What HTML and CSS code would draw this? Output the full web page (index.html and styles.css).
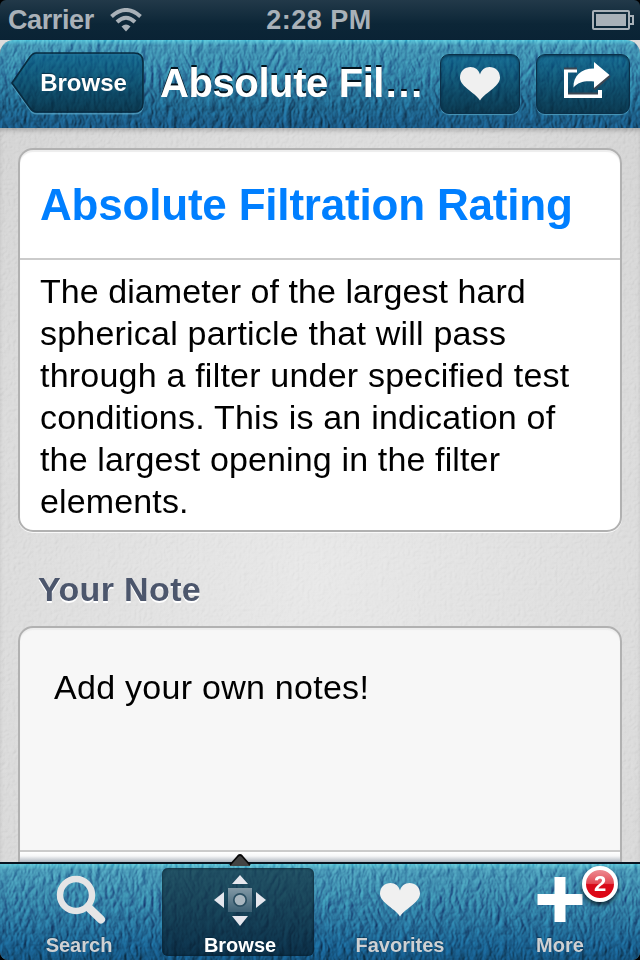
FILE: index.html
```html
<!DOCTYPE html>
<html lang="en">
<head>
<meta charset="utf-8">
<title>Absolute Filtration Rating</title>
<link rel="stylesheet" href="styles.css">
</head>
<body>
<svg class="defs" width="0" height="0" aria-hidden="true">
  <filter id="leather" x="0" y="0" width="100%" height="100%" color-interpolation-filters="sRGB">
    <feTurbulence type="turbulence" baseFrequency="0.13 0.07" numOctaves="4" seed="8" result="n"/>
    <feDiffuseLighting in="n" surfaceScale="1.3" diffuseConstant="0.74" lighting-color="#fff">
      <feDistantLight azimuth="205" elevation="44"/>
    </feDiffuseLighting>
  </filter>
  <filter id="paper" x="0" y="0" width="100%" height="100%" color-interpolation-filters="sRGB">
    <feTurbulence type="turbulence" baseFrequency="0.19" numOctaves="3" seed="3" result="n"/>
    <feDiffuseLighting in="n" surfaceScale=".8" diffuseConstant="0.74" lighting-color="#fff">
      <feDistantLight azimuth="215" elevation="44"/>
    </feDiffuseLighting>
  </filter>
</svg>
<div class="screen">
  <header class="status">
    <div class="carrier"><span>Carrier</span>
      <svg width="32" height="24" viewBox="0 0 32 24"><g fill="none" stroke="#a9b1b8" stroke-width="4"><path d="M1.500 8.500Q16-4.500 30.500 8.500"/><path d="M7 14Q16 5.500 25 14"/></g><path d="M11.500 18.500Q16 14.500 20.500 18.500L16 23.500Z" fill="#a9b1b8"/></svg>
    </div>
    <div class="clock">2:28 PM</div>
    <svg class="battery" width="42" height="20" viewBox="0 0 42 20"><rect x="1" y="1" width="36" height="18" rx="1" fill="none" stroke="#a9b1b8" stroke-width="2"/><path d="M4 4H34V16H4Z" fill="#a9b1b8"/><path d="M38 6H41V14H38" fill="none" stroke="#a9b1b8" stroke-width="2"/></svg>
  </header>
  <nav class="navbar">
    <svg class="grain" width="640" height="88"><rect width="640" height="88" filter="url(#leather)"/></svg>
    <button class="back"><svg width="136" height="64" viewBox="0 0 136 64"><defs><linearGradient id="bg" x1="0" y1="0" x2="0" y2="1"><stop offset="0" stop-color="#005680" stop-opacity=".64"/><stop offset="1" stop-color="#052a3b" stop-opacity=".74"/></linearGradient></defs><path d="M26 1H124Q133 1 133 10V51Q133 60 124 60H26Q23 60 20 56L2 31" transform="translate(0 1.700)" fill="none" stroke="#5ba8c9" stroke-width="1.500" opacity=".7"/><path d="M26 1H124Q133 1 133 10V51Q133 60 124 60H26Q23 60 20 56L2 31L20 5Q23 1 26 1Z" fill="url(#bg)" stroke="#082b40" stroke-width="1.700"/></svg><span>Browse</span></button>
    <h1>Absolute Fil…</h1>
    <button class="tool heart"><svg width="40" height="34" viewBox="0 0 40 34"><path d="M20 33.500C17 28.500 12 26 7 21.500C2.500 17.500 0 14.500 0 10.500C0 4 5 0 10.500 0C15 0 19 3 20 7.500C21 3 25 0 29.500 0C35 0 40 4 40 10.500C40 14.500 37.500 17.500 33 21.500C28 26 23 28.500 20 33.500Z" fill="#f0f0f0"/></svg></button>
    <button class="tool share"><svg width="48" height="38" viewBox="0 0 48 38"><path d="M14 8.500H3V34H37V28" fill="none" stroke="#fff" stroke-width="4"/><path d="M1 6.500H14M5 31.500H35" fill="none" stroke="#3b4652" stroke-width="2"/><path d="M31 27L46.500 13.500" stroke="#3b4652" stroke-width="3"/><path d="M31 0L46.500 13L31 26V19.500C22 18.500 15 20 10.500 25.500C10 14 18 6.500 31 6.500Z" fill="#fff"/></svg></button>
  </nav>
  <main class="content">
    <svg class="grain" width="640" height="734"><rect width="640" height="734" filter="url(#paper)"/></svg>
    <section class="card term">
      <h2>Absolute Filtration Rating</h2>
      <p><span class="first">The diameter of the largest hard</span><br>spherical particle that will pass<br>through a filter under specified test<br>conditions. This is an indication of<br><span class="last">the largest opening in the filter<br>elements.</span></p>
    </section>
    <h3>Your Note</h3>
    <section class="card note"><p>Add your own notes!</p><div class="next"></div></section>
  </main>
  <footer class="tabs">
    <svg class="grain" width="640" height="96"><rect width="640" height="96" filter="url(#leather)"/></svg>
    <div class="tab search"><svg width="50" height="50" viewBox="0 0 50 50"><circle cx="20" cy="20" r="16" fill="none" stroke="#e5e5e6" stroke-width="6.500"/><path d="M32 32L45 44.500" stroke="#e5e5e6" stroke-width="8" stroke-linecap="round"/></svg><span>Search</span></div>
    <div class="tab active"><svg width="52" height="52" viewBox="0 0 52 52"><defs><linearGradient id="pad" x1="0" y1="0" x2="0" y2="1"><stop offset="0" stop-color="#8198a5"/><stop offset="1" stop-color="#3c6074"/></linearGradient></defs><path d="M14 14H38V38H14Z" fill="url(#pad)"/><circle cx="26" cy="26" r="6.200" fill="#a9b7c0" stroke="#2b4f62" stroke-width="1.700"/><path d="M26 1L34 10H18ZM26 52L34 42H18ZM0 26L10 18V34ZM52 26L42 18V34Z" fill="#e5e7ee"/></svg><span>Browse</span></div>
    <div class="tab fav"><svg width="40" height="34" viewBox="0 0 40 34"><path d="M20 33.500C17 28.500 12 26 7 21.500C2.500 17.500 0 14.500 0 10.500C0 4 5 0 10.500 0C15 0 19 3 20 7.500C21 3 25 0 29.500 0C35 0 40 4 40 10.500C40 14.500 37.500 17.500 33 21.500C28 26 23 28.500 20 33.500Z" fill="#f0f0f0"/></svg><span>Favorites</span></div>
    <div class="tab more"><svg width="46" height="46" viewBox="0 0 46 46"><path d="M17.500 0H28.500V17H45.500V28H28.500V45H17.500V28H.5V17H17.500Z" fill="#fff"/></svg><span>More</span><b class="badge">2</b></div>
    <svg class="pointer" width="22" height="12" viewBox="0 0 22 12"><path d="M1 11L9 2Q11 0 13 2L21 11V12H1Z" fill="#434343"/><path d="M1 11L9 2Q11 0 13 2L21 11" fill="none" stroke="#080808" stroke-width="1.800"/></svg>
  </footer>
</div>
</body>
</html>
```
FILE: styles.css
```css
* { box-sizing: border-box; }
body { margin: 0; background: #000; font-family: "Liberation Sans", Arial, sans-serif; }
h1, h2, h3, p { margin: 0; }
svg { display: block; flex: none; }
.defs { position: absolute; }
.screen { width: 640px; height: 960px; display: flex; flex-direction: column; overflow: hidden; background: linear-gradient(#000 0, #000 20px, #dcdcdc 20px, #dcdcdc 900px, #000 900px); }
.status { height: 40px; flex: none; display: grid; grid-template-columns: 1fr auto 1fr; align-items: center; padding: 0 6px 0 8px; background: linear-gradient(#223949, #0c2637 60%, #0a2335); color: #a9b1b8; font-weight: bold; font-size: 27px; border-radius: 6px 6px 0 0; }
.carrier { display: flex; align-items: center; gap: 16px; letter-spacing: -.4px; }
.clock { letter-spacing: .5px; padding-right: 4px; }
.battery { justify-self: end; }
.grain { position: absolute; left: 0; top: 0; pointer-events: none; }
.navbar, .tabs { position: relative; isolation: isolate; overflow: hidden; }
.navbar { height: 88px; flex: none; display: flex; align-items: flex-start; background: linear-gradient(#54c3d9 0, #4394b4 5px, #3483a8 35%, #1f648b 75%, #185580); border-radius: 14px 14px 0 0; }
.navbar .grain, .tabs .grain { z-index: -1; mix-blend-mode: overlay; opacity: .75; }
button { border: 0; padding: 0; background: none; color: #fff; font-family: inherit; }
.back { display: grid; margin: 12px 0 0 10px; width: 136px; height: 64px; }
.back svg, .back span { grid-area: 1 / 1; }
.back span { align-self: center; padding: 0 0 2px 11px; font-size: 24px; font-weight: bold; text-shadow: 0 -1px 1px #0b3148; }
h1 { margin: 20px 0 0 14px; width: 280px; font-size: 40px; line-height: 46px; letter-spacing: -.4px; color: #fff; text-shadow: 0 -2px 0 #04141e; white-space: nowrap; }
.tool { display: flex; align-items: center; justify-content: center; margin-top: 14px; height: 60px; border-radius: 9px; background: linear-gradient(rgba(0,86,128,.64), rgba(5,42,59,.74)); border: 1px solid #0b3049; box-shadow: inset 0 1px 3px #08304a, 0 1px 1px #4b98b9; }
.heart { width: 80px; }
.share { width: 94px; margin-left: 16px; }
.share svg { margin: 0 0 7px 8px; }
.content { position: relative; isolation: isolate; flex: 1; min-height: 0; overflow: hidden; padding: 20px 18px 0; background: radial-gradient(ellipse at 50% 62%, #e8e8e8, #dedede 62%, #d4d4d4); box-shadow: inset 0 4px 5px -2px rgba(0,0,0,.25); }
.content .grain { z-index: -1; mix-blend-mode: soft-light; opacity: .6; }
.card { border: 2px solid #b1b1b1; border-radius: 15px; background: #fff; box-shadow: 0 1px 0 #f9f9f9, inset 0 2px 1px #ededed; }
.term { height: 384px; }
h2 { height: 110px; padding-left: 20px; border-bottom: 2px solid #cbcbcb; font-size: 44px; line-height: 110px; letter-spacing: -.2px; color: #007fff; white-space: nowrap; }
.term p { padding: 10px 0 0 20px; font-size: 34px; line-height: 42px; letter-spacing: .21px; white-space: nowrap; }
.first { letter-spacing: .06px; }
.last { letter-spacing: .14px; }
h3 { height: 94px; padding: 37px 0 0 20px; font-size: 34px; line-height: 40px; letter-spacing: .35px; color: #4c566c; text-shadow: 0 2px 0 #fff; }
.note { height: 270px; background: #f7f7f7; overflow: hidden; }
.note p { height: 222px; padding: 38px 0 0 34px; font-size: 34px; line-height: 42px; letter-spacing: .27px; }
.next { height: 46px; border-top: 2px solid #cbcbcb; background: linear-gradient(#fff 0, #f6f7f8 4px, #a5adb7 11px); }
.tabs { height: 98px; flex: none; display: flex; padding-top: 4px; background: linear-gradient(#081521 0, #081521 2px, #5ac2d6 2px, #4796b5 8px, #347fa5 40%, #195e8c 85%, #14517b); overflow: visible; border-radius: 0 0 8px 8px; }
.tabs .grain { top: 2px; clip-path: inset(0 round 0 0 8px 8px); }
.tab { position: relative; width: 160px; height: 94px; padding-top: 9px; display: flex; flex-direction: column; align-items: center; color: #cfd1d3; font-size: 20px; font-weight: bold; text-shadow: 0 -1px 1px rgba(0,30,50,.5); }
.tab span { margin-top: auto; padding-bottom: 4px; line-height: 22px; }
.search { padding-right: 2px; }
.search svg { margin-left: 3px; }
.active { width: 152px; height: 88px; margin: 2px 6px 0 2px; padding: 6px 0 0 4px; border-radius: 6px; background: linear-gradient(rgba(19,55,71,.75), rgba(7,30,46,.72)); box-shadow: inset 0 0 3px #061b29; color: #fff; }
.active span { padding-bottom: 0; }
.fav { padding-top: 17px; }
.more { padding-top: 11px; }
.more svg { margin-right: 1px; }
.badge { position: absolute; left: 102px; top: 0; width: 36px; height: 36px; border: 4px solid #fff; border-radius: 50%; background: linear-gradient(#ed8b92 0, #e34852 48%, #d80b19 52%, #df0615); box-shadow: 0 3px 4px rgba(0,0,0,.65); color: #fff; font-size: 22px; line-height: 28px; text-align: center; text-shadow: none; }
.pointer { position: absolute; left: 229px; top: -8px; }
```
